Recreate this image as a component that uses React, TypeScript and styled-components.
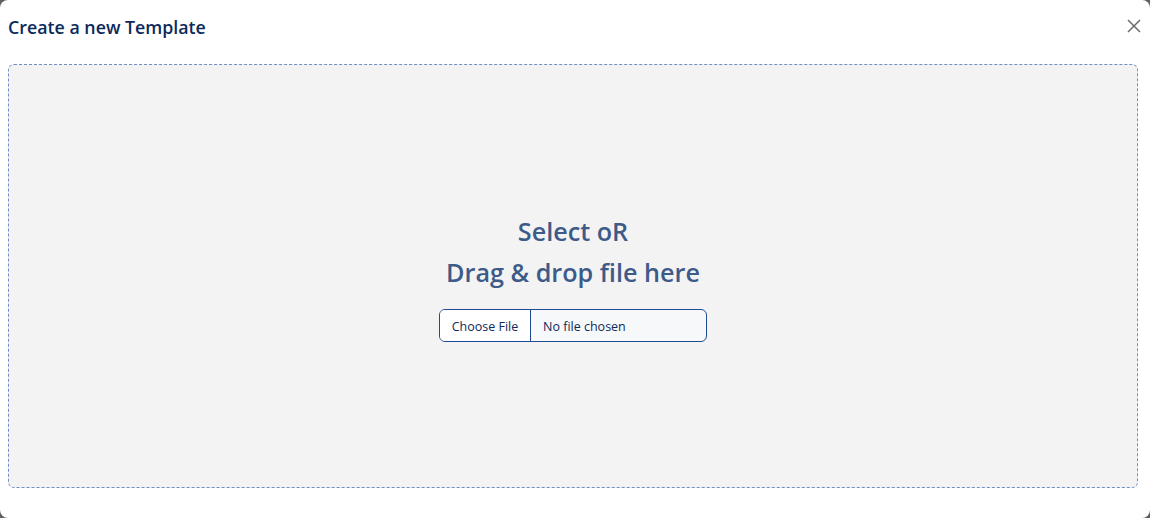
import React from "react";
import styled, { createGlobalStyle } from "styled-components";

const Global = createGlobalStyle`
  html, body { margin: 0; padding: 0; background: #5f5f5f; }
  body { font-family: "Open Sans", "Noto Sans", sans-serif; }
  * { box-sizing: border-box; }
`;

const Modal = styled.div`
  width: 1150px;
  height: 518px;
  background: #ffffff;
  border-radius: 8px;
  display: flex;
  flex-direction: column;
  padding: 0 12px 30px 8px;
`;

const Header = styled.div`
  height: 64px;
  display: flex;
  align-items: flex-start;
  justify-content: space-between;
  padding-top: 14px;
`;

const Title = styled.h1`
  margin: 0;
  font-size: 17.8px;
  font-weight: 600;
  color: #0c2a5b;
  line-height: 26px;
`;

const Close = styled.button`
  border: none;
  background: none;
  padding: 0;
  margin: 4px -4px 0 0;
  width: 16px;
  height: 16px;
  display: flex;
  cursor: pointer;
`;

const DropZone = styled.div`
  flex: 1;
  border: 1px dashed #6f8fc6;
  border-radius: 6px;
  background: #f3f3f3;
  display: flex;
  flex-direction: column;
  align-items: center;
  justify-content: center;
`;

const DropText = styled.div`
  font-size: 25.2px;
  font-weight: 600;
  color: #3d5a88;
  line-height: 41px;
  text-align: center;
`;

const FileBox = styled.label`
  margin-top: 16px;
  margin-bottom: -1px;
  width: 268px;
  height: 33px;
  border: 1px solid #1f4a94;
  border-radius: 6px;
  background: #f7f8fa;
  display: flex;
  align-items: stretch;
  overflow: hidden;
  font-size: 12.5px;
  color: #0c2a5b;
  cursor: pointer;
`;

const ChooseBtn = styled.span`
  width: 91px;
  border-right: 1px solid #1f4a94;
  background: #ffffff;
  display: flex;
  align-items: center;
  justify-content: center;
  padding-top: 2px;
`;

const FileName = styled.span`
  display: flex;
  align-items: center;
  padding: 2px 0 0 12px;
`;

const HiddenInput = styled.input`
  display: none;
`;

export default function App() {
  return (
    <>
      <Global />
      <Modal>
        <Header>
          <Title>Create a new Template</Title>
          <Close aria-label="Close">
            <svg width="16" height="16" viewBox="0 0 16 16">
              <path d="M2 2 L14 14 M14 2 L2 14" stroke="#6b6b6b" strokeWidth="1.5" />
            </svg>
          </Close>
        </Header>
        <DropZone>
          <DropText>Select oR</DropText>
          <DropText>Drag &amp; drop file here</DropText>
          <FileBox>
            <ChooseBtn>Choose File</ChooseBtn>
            <FileName>No file chosen</FileName>
            <HiddenInput type="file" />
          </FileBox>
        </DropZone>
      </Modal>
    </>
  );
}
